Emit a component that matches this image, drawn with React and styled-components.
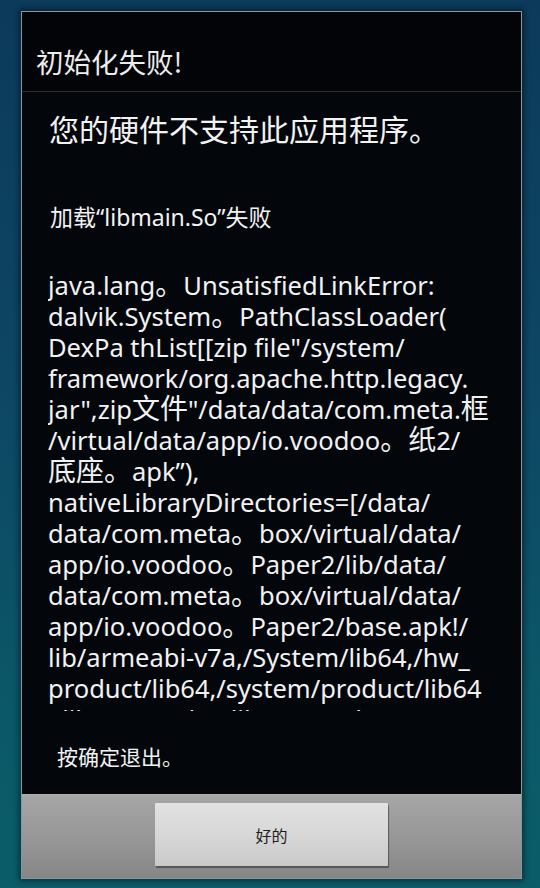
import styled, { createGlobalStyle } from 'styled-components';

const GlobalStyle = createGlobalStyle`
  html, body {
    margin: 0;
    padding: 0;
  }

  body {
    width: 540px;
    height: 888px;
    overflow: hidden;
    background: linear-gradient(180deg, #0c3a5b 0%, #0d4764 45%, #0b5868 80%, #0a5d69 100%);
    font-family: 'Noto Sans', 'Noto Sans CJK SC', sans-serif;
  }
`;

const Screen = styled.div`
  width: 540px;
  height: 888px;
  box-sizing: border-box;
  padding: 11px 18px 9px 21px;
  display: flex;
`;

const Dialog = styled.section`
  flex: 1;
  display: flex;
  flex-direction: column;
  border: 1px solid #8796a0;
  background: #03070c;
  box-shadow: 0 0 6px 2px rgba(0, 0, 0, 0.45);
  overflow: hidden;
`;

const TitleBar = styled.header`
  height: 80px;
  box-sizing: border-box;
  padding: 18px 0 0 14px;
  display: flex;
  align-items: center;
  background: #020408;
  border-bottom: 1px solid #2a3036;
  color: #ececec;
  font-family: 'Noto Sans CJK SC', sans-serif;
  font-size: 27.5px;
`;

const Body = styled.div`
  flex: 1;
  display: flex;
  flex-direction: column;
  padding: 0 0 0 26px;
  color: #f2f2f2;
`;

const Message = styled.p`
  margin: 18px 0 0 1px;
  font-family: 'Noto Sans CJK SC', sans-serif;
  font-size: 30px;
  line-height: 36px;
`;

const Reason = styled.p`
  margin: 56px 0 0 2px;
  font-size: 23px;
  line-height: 30px;
`;

const Trace = styled.div`
  margin-top: 38px;
  height: 441px;
  overflow: hidden;
  font-size: 25.5px;
  line-height: 31px;
`;

const TraceLine = styled.div`
  height: 31px;
  white-space: nowrap;
`;

const Han = styled.span`
  font-family: 'Noto Sans CJK SC', sans-serif;
  font-size: 28px;
  line-height: 0;
`;

const Hint = styled.p`
  margin: 31px 0 0 9px;
  font-family: 'Noto Sans CJK SC', sans-serif;
  font-size: 21px;
  line-height: 28px;
`;

const ButtonBar = styled.footer`
  height: 84px;
  box-sizing: border-box;
  padding-top: 8px;
  display: flex;
  justify-content: center;
  align-items: flex-start;
  background: linear-gradient(180deg, #a6a6a6 0%, #969696 55%, #868686 100%);
  border-top: 1px solid #b0b0b0;
`;

const OkButton = styled.button`
  width: 233px;
  height: 63px;
  border: none;
  border-radius: 1px;
  background: linear-gradient(180deg, #e2e2e2 0%, #d6d6d6 55%, #c9c9c9 100%);
  box-shadow: 1px 2px 1px rgba(40, 40, 40, 0.55);
  color: #1e1e1e;
  font-family: 'Noto Sans CJK SC', sans-serif;
  font-size: 16px;
  cursor: pointer;
`;

// odd entries are CJK runs, which sit wider than the latin text
const traceLines = [
  ['java.lang', '。', 'UnsatisfiedLinkError:'],
  ['dalvik.System', '。', 'PathClassLoader('],
  ['DexPa thList[[zip file"/system/'],
  ['framework/org.apache.http.legacy.'],
  ['jar",zip', '文件', '"/data/data/com.meta.', '框'],
  ['/virtual/data/app/io.voodoo', '。纸', '2/'],
  ['', '底座。', 'apk”),'],
  ['nativeLibraryDirectories=[/data/'],
  ['data/com.meta', '。', 'box/virtual/data/'],
  ['app/io.voodoo', '。', 'Paper2/lib/data/'],
  ['data/com.meta', '。', 'box/virtual/data/'],
  ['app/io.voodoo', '。', 'Paper2/base.apk!/'],
  ['lib/armeabi-v7a,/System/lib64,/hw_'],
  ['product/lib64,/system/product/lib64'],
  ['Tlib64,/vendor/lib64,/product/"]]]'],
];

export default function App() {
  return (
    <>
      <GlobalStyle />
      <Screen>
        <Dialog>
          <TitleBar>初始化失败!</TitleBar>
          <Body>
            <Message>您的硬件不支持此应用程序。</Message>
            <Reason>加载“libmain.So”失败</Reason>
            <Trace>
              {traceLines.map((parts, i) => (
                <TraceLine key={i}>
                  {parts.map((part, j) =>
                    j % 2 === 1 ? <Han key={j}>{part}</Han> : <span key={j}>{part}</span>
                  )}
                </TraceLine>
              ))}
            </Trace>
            <Hint>按确定退出。</Hint>
          </Body>
          <ButtonBar>
            <OkButton>好的</OkButton>
          </ButtonBar>
        </Dialog>
      </Screen>
    </>
  );
}
